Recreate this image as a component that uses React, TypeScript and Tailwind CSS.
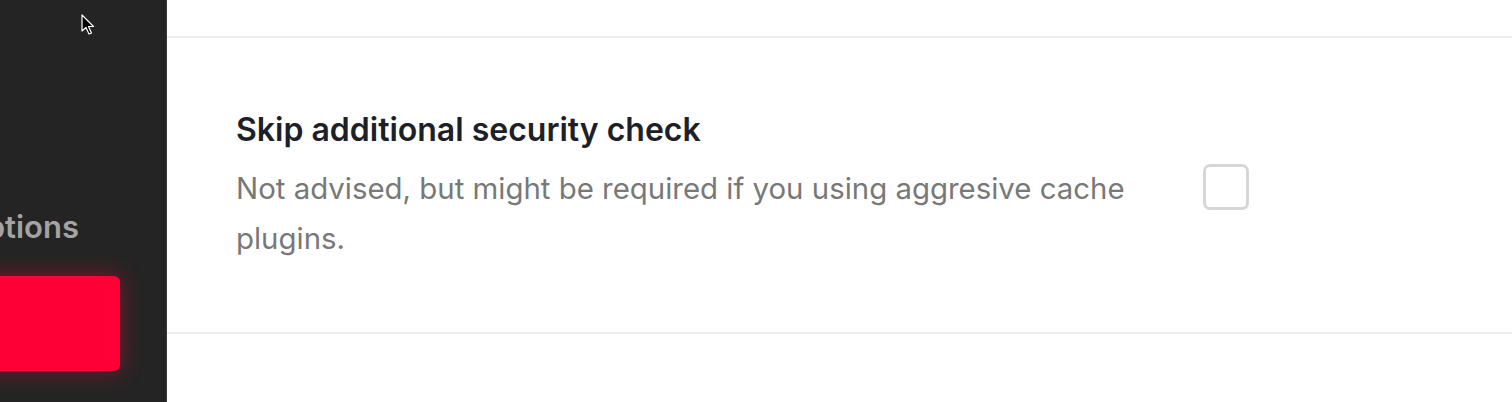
import React from "react";

export default function App() {
  return (
    <div className="relative flex h-[402px] w-[1512px] overflow-hidden bg-white" style={{ fontFamily: "Inter, 'Noto Sans', sans-serif" }}>
      <aside className="relative flex w-[167px] shrink-0 flex-col overflow-hidden border-r border-[#3a3a3a] bg-[#242424]">
        <div className="mt-[207px] flex w-[79px] justify-end whitespace-nowrap text-[31px] font-semibold leading-[40px] text-[#a3a3a3]">
          Options
        </div>
        <div className="ml-[-40px] mt-[29px] h-[95px] w-[160px] rounded-[6px] bg-[#ff0036] shadow-[0_0_22px_rgba(255,0,54,0.45)]" />
      </aside>
      <main className="flex flex-1 flex-col">
        <div className="h-[38px] border-b-2 border-[#ececec]" />
        <div className="flex h-[296px] items-center border-b-2 border-[#ececec] pl-[69px] pt-[3px]">
          <div className="w-[920px]">
            <div className="text-[32px] font-semibold leading-[40px] text-[#1d2127]">Skip additional security check</div>
            <div className="mt-[14px] text-[29.4px] leading-[50px] text-[#787878]">
              Not advised, but might be required if you using aggresive cache plugins.
            </div>
          </div>
          <div className="ml-[47px] h-[46px] w-[46px] shrink-0 rounded-[7px] border-[3px] border-[#d6d6d6] bg-white" />
        </div>
      </main>
      <svg className="absolute left-[81px] top-[14px]" width="14" height="22" viewBox="0 0 14 22">
        <path d="M1 1 L1 17 L5 13.5 L8 20 L10.5 19 L7.5 12.5 L12.5 12.5 Z" fill="#000" stroke="#fff" strokeWidth="1.2" strokeLinejoin="round" />
      </svg>
    </div>
  );
}
